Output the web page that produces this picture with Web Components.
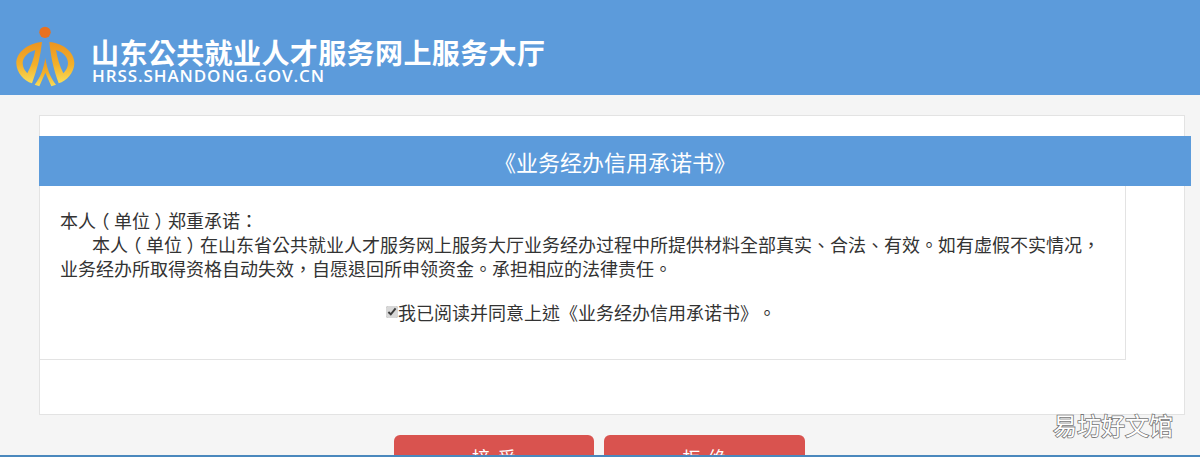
<!DOCTYPE html>
<html lang="zh-TW">
<head>
<meta charset="utf-8">
<title>业务经办信用承诺书</title>
<style>
html, body { margin: 0; padding: 0; height: 457px; overflow: hidden; }
body { background: #f5f5f5; font-family: "Liberation Sans", "Noto Sans CJK TC", sans-serif; color: #333; }
.paren { font-feature-settings: "halt"; padding: 0 .25em; }
</style>
</head>
<body>
<site-header title-text="山东公共就业人才服务网上服务大厅" domain="HRSS.SHANDONG.GOV.CN"></site-header>
<pledge-card heading="《业务经办信用承诺书》" agree="我已阅读并同意上述《业务经办信用承诺书》。">
  <p>本人<span class="paren">（</span>单位<span class="paren">）</span>郑重承诺：</p>
  <p class="indent">本人<span class="paren">（</span>单位<span class="paren">）</span>在山东省公共就业人才服务网上服务大厅业务经办过程中所提供材料全部真实、合法、有效。如有虚假不实情况，业务经办所取得资格自动失效，自愿退回所申领资金。承担相应的法律责任。</p>
</pledge-card>
<action-bar>
  <action-button>接 受</action-button>
  <action-button wide>拒 绝</action-button>
</action-bar>
<water-mark>易坊好文馆</water-mark>
<foot-strip></foot-strip>

<script>
const logo = `
<svg width="72" height="70" viewBox="0 0 216 210">
  <defs>
    <linearGradient id="gold" x1="0" y1="0" x2="0" y2="1">
      <stop offset="0" stop-color="#ec9420"/>
      <stop offset="0.55" stop-color="#f3b02a"/>
      <stop offset="1" stop-color="#f8dd5a"/>
    </linearGradient>
  </defs>
  <circle cx="105" cy="31" r="17" fill="#e8711f"/>
  <path fill="url(#gold)" fill-rule="evenodd" d="M96 60C55 64 18 90 19 125C20 152 42 176 66 184C82 142 92 100 96 60ZM76 84C54 90 38 106 38 124C38 136 44 146 52 154C63 132 72 108 76 84Z"/>
  <path fill="url(#gold)" fill-rule="evenodd" d="M118 60C159 64 194 90 193 125C192 152 170 176 146 184C130 142 122 100 118 60ZM138 84C160 90 174 106 174 124C174 136 168 146 160 154C149 132 142 108 138 84Z"/>
  <path fill="url(#gold)" d="M106 108C101 140 92 165 74 188L88 193L106 152L124 193L138 188C120 165 111 140 106 108Z"/>
</svg>`

const bodyFont = '400 18px/24px "Noto Sans CJK TC", sans-serif'

class SiteHeader extends HTMLElement {
    connectedCallback() {
        this.attachShadow({ mode: 'open' }).innerHTML = `<style>
        :host { display: flex; height: 95px; background: #5c9bdb; box-sizing: border-box; padding: 22px 0 0 10px; color: #fff; }
        svg { display: block; }
        .text { margin: 15px 0 0 9px; }
        .name { font: 700 28px/30px "Noto Sans CJK SC", sans-serif; letter-spacing: .4px; white-space: nowrap; }
        .domain { font: 600 17px/18px "Open Sans", sans-serif; letter-spacing: .9px; margin: 0 0 0 1px; white-space: nowrap; }
        </style>
        ${logo}
        <div class="text">
            <div class="name">${this.getAttribute('title-text')}</div>
            <div class="domain">${this.getAttribute('domain')}</div>
        </div>`
    }
}

class PledgeCard extends HTMLElement {
    connectedCallback() {
        this.attachShadow({ mode: 'open' }).innerHTML = `<style>
        :host { display: block; box-sizing: border-box; width: 1146px; height: 300px; margin: 20px 0 0 39px; padding-top: 20px; background: #fff; border: 1px solid #e3e3e3; text-spacing-trim: space-all; }
        .bar { width: 1152px; height: 50px; margin-left: -1px; background: #5c9bdb; color: #fff; text-align: center; font: 400 22px/51px "Noto Sans CJK TC", sans-serif; }
        .box { box-sizing: border-box; width: 1086px; height: 174px; padding: 22px 20px 0 20px; border-right: 1px solid #e3e3e3; border-bottom: 1px solid #e3e3e3; }
        ::slotted(p) { margin: 0; font: ${bodyFont}; color: #333; }
        ::slotted(p.indent) { text-indent: 32px; }
        .agree { display: flex; align-items: center; justify-content: center; margin-top: 20px; padding-right: 3px; font: ${bodyFont}; color: #333; }
        input { width: 12px; height: 12px; margin: 0; accent-color: #d8d8d8; }
        </style>
        <div class="bar">${this.getAttribute('heading')}</div>
        <div class="box">
            <slot></slot>
            <label class="agree"><input type="checkbox" checked>${this.getAttribute('agree')}</label>
        </div>`
    }
}

class ActionBar extends HTMLElement {
    connectedCallback() {
        this.attachShadow({ mode: 'open' }).innerHTML = `<style>
        :host { display: flex; justify-content: center; gap: 10px; margin-top: 20px; padding-right: 1px; }
        </style><slot></slot>`
    }
}

class ActionButton extends HTMLElement {
    connectedCallback() {
        const w = this.hasAttribute('wide') ? 201 : 200
        this.attachShadow({ mode: 'open' }).innerHTML = `<style>
        :host { display: block; box-sizing: border-box; width: ${w}px; height: 44px; background: #d9534f; border-radius: 6px; color: #fff; text-align: center; font: 400 18px/44px "Noto Sans CJK SC", sans-serif; word-spacing: 4px; }
        </style><slot></slot>`
    }
}

class WaterMark extends HTMLElement {
    connectedCallback() {
        this.attachShadow({ mode: 'open' }).innerHTML = `<style>
        :host { position: absolute; left: 1053px; top: 409px; font: 400 24px/32px "Noto Sans CJK SC", sans-serif; color: #fff; -webkit-text-stroke: 1.6px #777; paint-order: stroke fill; white-space: nowrap; }
        </style><slot></slot>`
    }
}

class FootStrip extends HTMLElement {
    connectedCallback() {
        this.attachShadow({ mode: 'open' }).innerHTML = `<style>
        :host { position: absolute; left: 0; right: 0; top: 455px; height: 2px; background: #4a88bd; }
        </style>`
    }
}

customElements.define('site-header', SiteHeader)
customElements.define('pledge-card', PledgeCard)
customElements.define('action-bar', ActionBar)
customElements.define('action-button', ActionButton)
customElements.define('water-mark', WaterMark)
customElements.define('foot-strip', FootStrip)
</script>
</body>
</html>
